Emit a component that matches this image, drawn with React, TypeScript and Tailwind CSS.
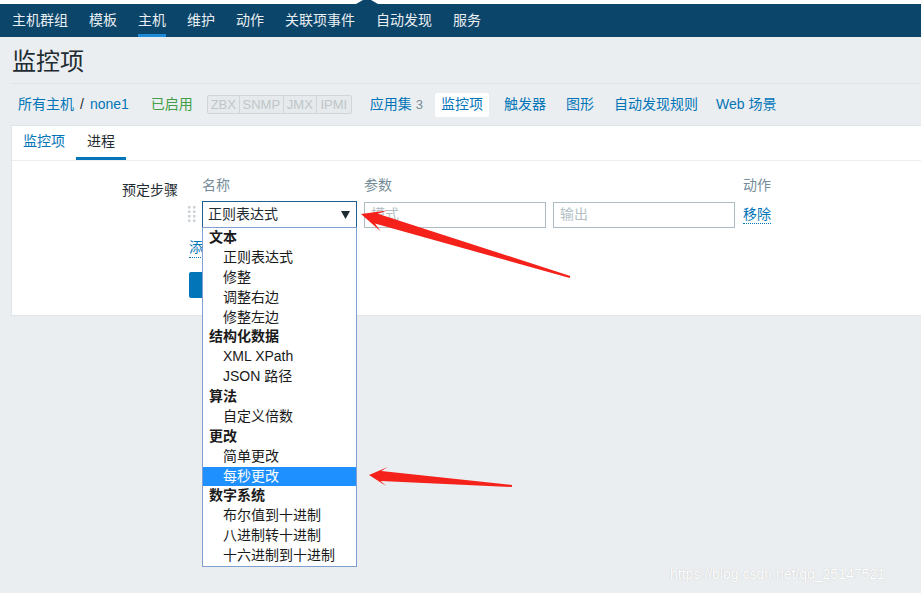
import React from "react";

type Item = { t: string; g?: boolean; sel?: boolean };

const items: Item[] = [
  { t: "文本", g: true },
  { t: "正则表达式" },
  { t: "修整" },
  { t: "调整右边" },
  { t: "修整左边" },
  { t: "结构化数据", g: true },
  { t: "XML XPath" },
  { t: "JSON 路径" },
  { t: "算法", g: true },
  { t: "自定义倍数" },
  { t: "更改", g: true },
  { t: "简单更改" },
  { t: "每秒更改", sel: true },
  { t: "数字系统", g: true },
  { t: "布尔值到十进制" },
  { t: "八进制转十进制" },
  { t: "十六进制到十进制" },
];

function arrow(
  tx: number,
  ty: number,
  hx: number,
  hy: number,
  headLen: number,
  headW: number,
  innerLen: number,
  shaftW: number,
  tailW: number
) {
  const dx = hx - tx;
  const dy = hy - ty;
  const L = Math.hypot(dx, dy);
  const ux = dx / L;
  const uy = dy / L;
  const nx = -uy;
  const ny = ux;
  const bx = hx - ux * headLen;
  const by = hy - uy * headLen;
  const ix = hx - ux * innerLen;
  const iy = hy - uy * innerLen;
  const pts = [
    [hx, hy],
    [bx + nx * headW, by + ny * headW],
    [ix + nx * shaftW, iy + ny * shaftW],
    [tx + nx * tailW, ty + ny * tailW],
    [tx - nx * tailW, ty - ny * tailW],
    [ix - nx * shaftW, iy - ny * shaftW],
    [bx - nx * headW, by - ny * headW],
  ];
  return pts.map((p) => `${p[0].toFixed(1)},${p[1].toFixed(1)}`).join(" ");
}

const navItems = ["主机群组", "模板", "主机", "维护", "动作", "关联项事件", "自动发现", "服务"];

export default function App() {
  return (
    <div className="relative w-[921px] h-[593px] overflow-hidden bg-[#ebeef0] font-['Liberation_Sans','Noto_Sans_CJK_SC',sans-serif] text-[#1f2c33]">
      {/* top white strip */}
      <div className="relative h-[4px] bg-white">
        <svg className="absolute left-[356px] top-0" width="22" height="4" viewBox="0 0 22 4">
          <polygon points="7,0 15,0 22,4 0,4" fill="#0b456a" />
        </svg>
      </div>
      {/* nav */}
      <div className="h-[33px] bg-[#0b456a] flex items-stretch pl-[12px] gap-[21px]">
        {navItems.map((n) => (
          <div
            key={n}
            className={`flex items-center pt-[2px] text-[14px] text-[#e9eef2] border-b-[3px] ${
              n === "主机" ? "border-[#1f8bd8]" : "border-transparent"
            }`}
          >
            {n}
          </div>
        ))}
      </div>
      {/* title */}
      <div className="ml-[11px] h-[47px] border-b border-[#dde3e6] flex items-center pl-[1px] pt-[4px] text-[24px] leading-none text-[#1f2c33]">
        监控项
      </div>
      {/* breadcrumb */}
      <div className="ml-[11px] h-[41px] flex items-center pl-[7px] text-[14px]">
        <span className="text-[#0275b8]">所有主机</span>
        <span className="mx-[6px] text-[#1f2c33]">/</span>
        <span className="text-[#0275b8]">none1</span>
        <span className="ml-[22px] text-[#429e47]">已启用</span>
        <div className="ml-[14px] flex h-[19px] rounded-[2px] border border-[#cfd6d9] bg-[#e6eaec] text-[13px] text-[#bec6ca] leading-[17px]">
          <span className="w-[32px] text-center border-r border-[#cfd6d9]">ZBX</span>
          <span className="w-[44px] text-center border-r border-[#cfd6d9]">SNMP</span>
          <span className="w-[33px] text-center border-r border-[#cfd6d9]">JMX</span>
          <span className="w-[34px] text-center">IPMI</span>
        </div>
        <span className="ml-[18px] text-[#0275b8]">应用集</span>
        <span className="ml-[4px] text-[13px] text-[#768d99]">3</span>
        <span className="ml-[12px] h-[24px] px-[6px] flex items-center bg-white rounded-[2px] text-[#0275b8]">监控项</span>
        <span className="ml-[15px] text-[#0275b8]">触发器</span>
        <span className="ml-[20px] text-[#0275b8]">图形</span>
        <span className="ml-[20px] text-[#0275b8]">自动发现规则</span>
        <span className="ml-[18px] text-[#0275b8]">Web 场景</span>
      </div>
      {/* panel */}
      <div className="ml-[11px] h-[191px] bg-white border border-r-0 border-[#dfe4e7]">
        <div className="h-[35px] border-b border-[#ebeef0] flex items-stretch text-[14px]">
          <div className="px-[11px] flex items-center border-b-[3px] border-transparent text-[#0275b8]">监控项</div>
          <div className="px-[11px] flex items-center border-b-[3px] border-[#0275b8] text-[#1f2c33]">进程</div>
        </div>
        <div className="pt-[14px] flex text-[14px]">
          <div className="w-[166px] text-right pt-[5px] leading-[20px] text-[#1f2c33]">预定步骤</div>
          <div className="ml-[10px] flex flex-col">
            <div className="flex h-[20px] leading-[20px] text-[#768d99]">
              <span className="w-[14px]" />
              <span className="w-[162px]">名称</span>
              <span className="w-[379px]">参数</span>
              <span>动作</span>
            </div>
            <div className="mt-[6px] flex items-center">
              <div className="w-[14px] flex">
                <svg width="8" height="17" viewBox="0 0 8 17">
                  {[0, 4.5, 9, 13.5].map((y) => (
                    <g key={y}>
                      <rect x="0" y={y} width="2.5" height="2.5" fill="#ccd3d7" />
                      <rect x="5" y={y} width="2.5" height="2.5" fill="#ccd3d7" />
                    </g>
                  ))}
                </svg>
              </div>
              <div className="w-[155px] h-[27px] border border-[#1f5f8f] flex items-center justify-between pl-[5px] pr-[6px] text-[#1f2c33]">
                <span>正则表达式</span>
                <svg width="9" height="8" viewBox="0 0 9 8">
                  <polygon points="0,0 9,0 4.5,8" fill="#1f2c33" />
                </svg>
              </div>
              <div className="ml-[7px] w-[182px] h-[26px] border border-[#acbbc4] flex items-center pl-[6px] text-[#b4bfc5]">模式</div>
              <div className="ml-[7px] w-[182px] h-[26px] border border-[#acbbc4] flex items-center pl-[6px] text-[#b4bfc5]">输出</div>
              <span className="ml-[8px] text-[#0275b8] border-b border-dotted border-[#0275b8] leading-[18px]">移除</span>
            </div>
            <div className="mt-[10px] flex">
              <span className="ml-[1px] leading-[19px] text-[#0275b8] border-b border-dotted border-[#0275b8]">添加</span>
            </div>
            <div className="mt-[14px] flex">
              <div className="ml-[1px] w-[60px] h-[26px] rounded-[2px] bg-[#0275b8] text-white flex items-center justify-center">更新</div>
            </div>
          </div>
        </div>
      </div>

      {/* dropdown list */}
      <div className="absolute left-[202px] top-[227px] w-[155px] bg-white border border-[#7f9fd0] py-0 text-[14px] text-[#1a1a1a]">
        {items.map((it) => (
          <div
            key={it.t}
            className={`h-[19.875px] leading-[19.875px] whitespace-nowrap ${it.g ? "pl-[6px] font-bold" : "pl-[20px]"} ${
              it.sel ? "bg-[#1e90ff] text-white" : ""
            }`}
          >
            {it.t}
          </div>
        ))}
      </div>

      {/* annotation arrows */}
      <svg className="absolute left-0 top-0 pointer-events-none" width="921" height="593" viewBox="0 0 921 593">
        <polygon points={arrow(570, 277, 361, 214, 24, 11, 16, 5, 1)} fill="#f5221b" />
        <polygon points={arrow(512, 486, 369, 475, 18, 9.5, 12, 5, 1)} fill="#f5221b" />
      </svg>

      {/* watermark */}
      <div className="absolute left-[670px] top-[564px] text-[14px] text-white [text-shadow:0_0_1px_rgba(150,150,150,0.6)]">
        https://blog.csdn.net/qq_25147521
      </div>
    </div>
  );
}
